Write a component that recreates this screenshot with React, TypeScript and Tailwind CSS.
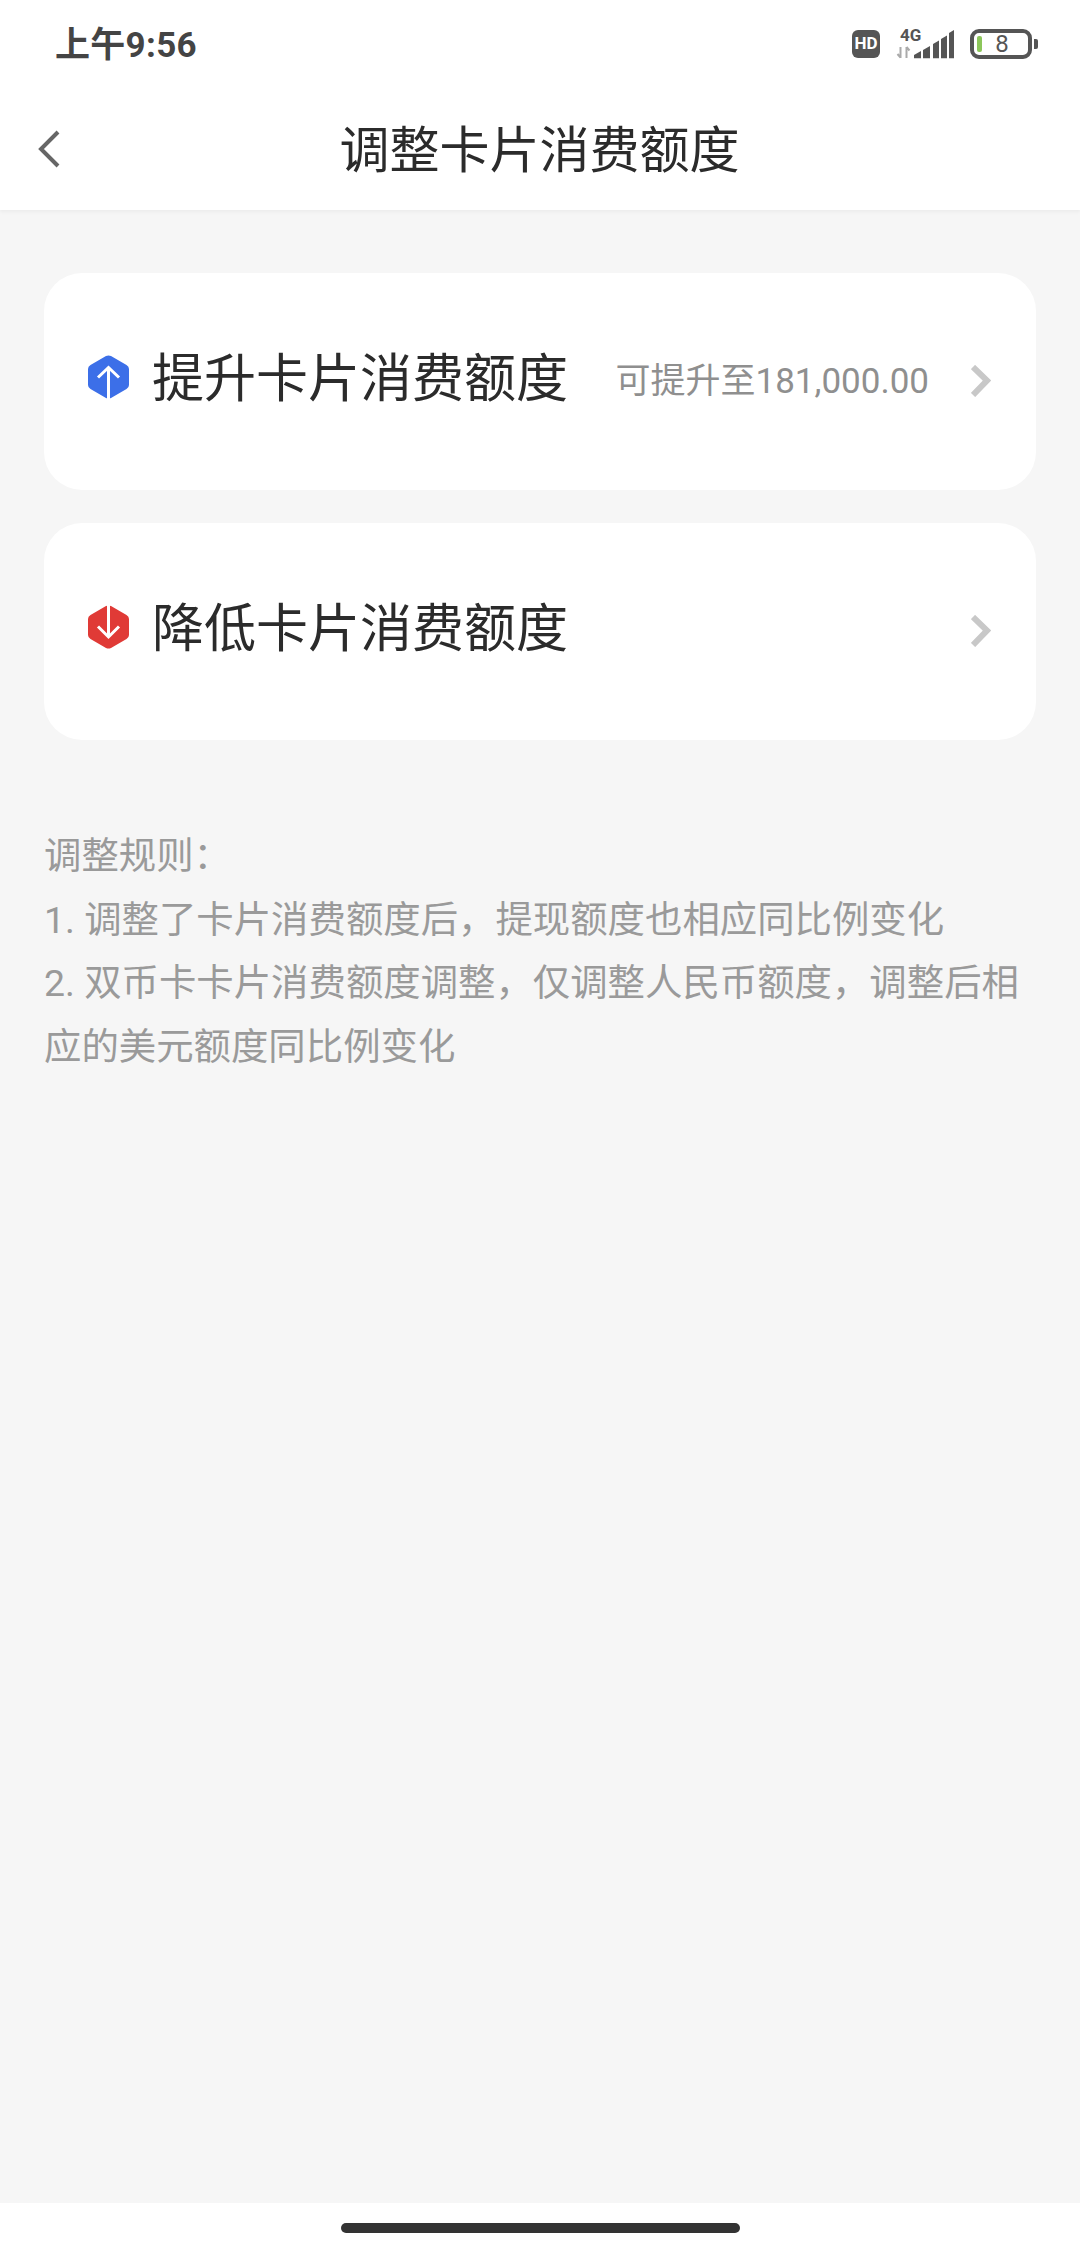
const CJK = "font-['Roboto','Noto_Sans_CJK_SC',sans-serif]";

function Chevron() {
  return (
    <svg width="20" height="32" viewBox="0 0 20 32" className="shrink-0 -mt-[2px]">
      <path d="M2 2 L16 15.5 L2 30" fill="none" stroke="#c8c8c8" strokeWidth="6" />
    </svg>
  );
}

function Hex({ color, down }: { color: string; down?: boolean }) {
  return (
    <svg width="41" height="44" viewBox="0 0 41 44" className="shrink-0 -mt-[9px]">
      <path
        d="M18 1 Q20.5 -0.2 23 1 L38.5 10 Q41 11.4 41 14 L41 30 Q41 32.6 38.5 34 L23 43 Q20.5 44.2 18 43 L2.5 34 Q0 32.6 0 30 L0 14 Q0 11.4 2.5 10 Z"
        fill={color}
      />
      {down ? (
        <path d="M20.5 0 V32 M10 21.5 L20.5 32 L31 21.5" fill="none" stroke="#fff" strokeWidth="3" />
      ) : (
        <path d="M20.5 44 V13 M10 22.5 L20.5 12.5 L31 22.5" fill="none" stroke="#fff" strokeWidth="3" />
      )}
    </svg>
  );
}

function Card({ color, down, title, hint }: { color: string; down?: boolean; title: string; hint?: string }) {
  return (
    <div className="h-[217px] bg-white rounded-[38px] flex items-center pl-[44px] pr-[45px]">
      <Hex color={color} down={down} />
      <div className="ml-[23px] text-[52px] leading-[60px] text-[#2b2b2b] -mt-[4px]">{title}</div>
      <div className="flex-1" />
      {hint && <div className="text-[35px] leading-[40px] text-[#8f8f8f] mr-[42px]">{hint}</div>}
      <Chevron />
    </div>
  );
}

export default function App() {
  return (
    <div className={`w-[1080px] h-[2248px] bg-[#f6f6f6] flex flex-col ${CJK}`}>
      <div className="h-[210px] bg-white shadow-[0_2px_3px_#ececec] flex flex-col">
        <div className="h-[88px] pl-[55px] pr-[42px] flex items-center justify-between">
          <div className="text-[35px] leading-[40px] font-bold tracking-[0.3px] text-[#444444] mt-[3px]">上午9:56</div>
          <div className="flex items-center">
            <div className="w-[28px] h-[28px] rounded-[6px] bg-[#555555] text-white text-[17px] font-bold flex items-center justify-center">HD</div>
            <svg width="57" height="30" viewBox="0 0 57 30" className="ml-[17px] overflow-visible">
              <text x="3" y="12" fontSize="17" fontWeight="700" fill="#555555" fontFamily="Roboto, sans-serif">4G</text>
              <path d="M3.5 18 V29 M0.5 25 L3.5 28.5 M9.5 29 V18 M9.5 18 L12.5 21.5" stroke="#aaaaaa" strokeWidth="2" fill="none" />
              <path d="M17 26 L24 22 V29.3 H17 Z" fill="#555555" />
              <path d="M26 21 L33 17 V29.3 H26 Z" fill="#555555" />
              <path d="M36 15 L42 11.5 V29.3 H36 Z" fill="#555555" />
              <path d="M44 10 L50 6.5 V29.3 H44 Z" fill="#555555" />
              <path d="M52 4 L57 1 V29.3 H52 Z" fill="#555555" />
            </svg>
            <div className="ml-[16px] relative w-[62px] h-[30px] border-[4px] border-[#555555] rounded-[9px] flex items-center justify-center text-[24px] leading-none text-[#555555] pl-[2px]">
              8
              <div className="absolute left-[3px] top-[3px] w-[5px] h-[16px] rounded-[2px] bg-[#8cc65a]" />
            </div>
            <div className="ml-[2px] w-[4px] h-[10px] rounded-r-[2px] bg-[#555555]" />
          </div>
        </div>
        <div className="relative flex-1 flex items-center justify-center">
          <svg width="22" height="38" viewBox="0 0 22 38" className="absolute left-[38px] top-[42px]">
            <path d="M20 2 L3 19 L20 36" fill="none" stroke="#666666" strokeWidth="4" />
          </svg>
          <div className="text-[50px] leading-[60px] text-[#2b2b2b] mt-[3px] -ml-[1px]">调整卡片消费额度</div>
        </div>
      </div>
      <div className="flex-1 px-[44px] pt-[63px]">
        <div className="flex flex-col gap-[33px]">
          <Card color="#3c6fe8" title="提升卡片消费额度" hint="可提升至181,000.00" />
          <Card color="#e03a36" down title="降低卡片消费额度" />
        </div>
        <div className="mt-[85px] text-[37.4px] leading-[63.5px] text-[#9a9a9a]">
          <div>调整规则：</div>
          <div>1. 调整了卡片消费额度后，提现额度也相应同比例变化</div>
          <div>2. 双币卡卡片消费额度调整，仅调整人民币额度，调整后相应的美元额度同比例变化</div>
        </div>
      </div>
      <div className="h-[45px] bg-white flex justify-center pt-[20px]">
        <div className="w-[399px] h-[10px] rounded-full bg-[#333333]" />
      </div>
    </div>
  );
}
